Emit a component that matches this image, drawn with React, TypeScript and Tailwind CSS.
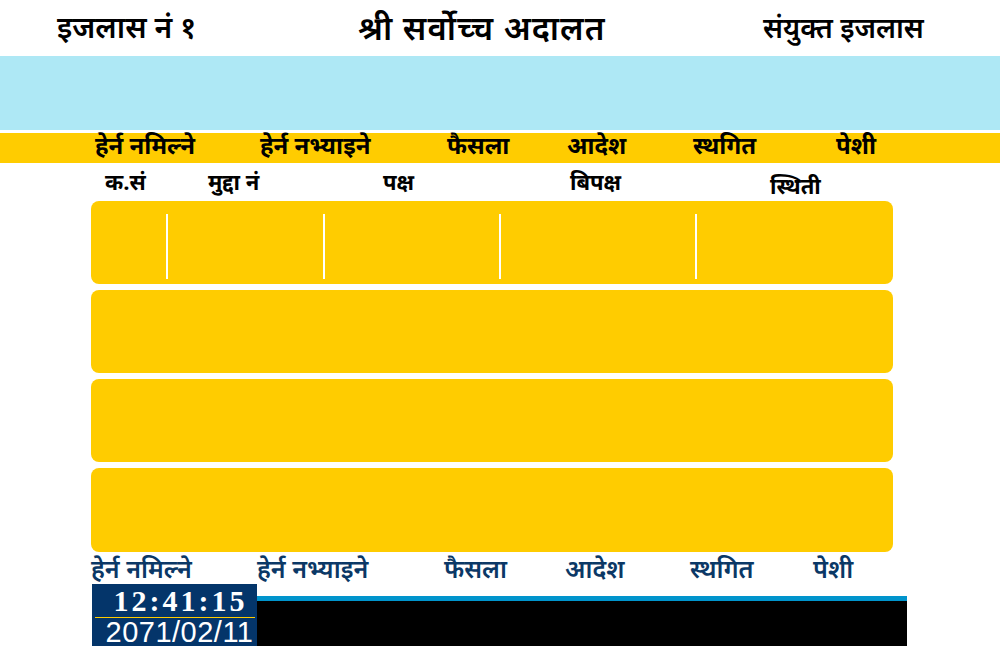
const topTabs = [
  { label: "हेर्न नमिल्ने", x: "w-[165px]" },
  { label: "हेर्न नभ्याइने", x: "w-[187px]" },
  { label: "फैसला", x: "w-[120px]" },
  { label: "आदेश", x: "w-[126px]" },
  { label: "स्थगित", x: "w-[143px]" },
  { label: "पेशी", x: "w-[60px]" },
];

const bottomTabs = [
  { label: "हेर्न नमिल्ने", x: "w-[166px]" },
  { label: "हेर्न नभ्याइने", x: "w-[187px]" },
  { label: "फैसला", x: "w-[121px]" },
  { label: "आदेश", x: "w-[125px]" },
  { label: "स्थगित", x: "w-[123px]" },
  { label: "पेशी", x: "w-[60px]" },
];

const deva = "font-['Noto_Sans_Devanagari','Noto_Sans',sans-serif]";

export default function App() {
  return (
    <div className={`w-[1000px] h-[650px] bg-white overflow-hidden ${deva}`}>
      {/* header */}
      <div className="h-[56px] flex items-center pt-[6px] text-black font-semibold leading-none">
        <div className="w-[358px] pl-[57px] text-[30px]">इजलास नं १</div>
        <div className="w-[405px] text-[33px] tracking-[1px]">श्री सर्वोच्च अदालत</div>
        <div className="text-[28px]">संयुक्त इजलास</div>
      </div>
      <div className="h-[74px] bg-[#aee8f5]" />
      <div className="h-[3px]" />
      <div className="h-[30px] bg-[#ffcc00] flex items-center pl-[95px] text-[24px] font-bold text-black leading-none">
        {topTabs.map((t) => (
          <div key={t.label} className={t.x}>
            {t.label}
          </div>
        ))}
      </div>

      {/* column headings */}
      <div className="h-[38px] flex items-center text-[22px] font-bold text-black leading-none pt-[6px]">
        <div className="w-[208px] pl-[105px]">क.सं</div>
        <div className="w-[175px]">मुद्दा नं</div>
        <div className="w-[187px]">पक्ष</div>
        <div className="w-[200px]">बिपक्ष</div>
        <div className="pt-[8px]">स्थिती</div>
      </div>

      {/* rows */}
      <div className="flex flex-col gap-[6px] pl-[91px] w-[893px]">
        <div className="h-[83px] rounded-[8px] bg-[#ffcc00] flex items-start pt-[13px]">
          <div className="w-[75px]" />
          <div className="w-[2px] h-[65px] bg-white" />
          <div className="w-[155px]" />
          <div className="w-[2px] h-[65px] bg-white" />
          <div className="w-[174px]" />
          <div className="w-[2px] h-[65px] bg-white" />
          <div className="w-[194px]" />
          <div className="w-[2px] h-[65px] bg-white" />
        </div>
        <div className="h-[83px] rounded-[8px] bg-[#ffcc00]" />
        <div className="h-[83px] rounded-[8px] bg-[#ffcc00]" />
        <div className="h-[84px] rounded-[8px] bg-[#ffcc00]" />
      </div>

      {/* bottom tabs */}
      <div className="h-[32px] flex items-center pl-[91px] pt-[8px] text-[25px] font-semibold text-[#0b3866] leading-none">
        {bottomTabs.map((t) => (
          <div key={t.label} className={t.x}>
            {t.label}
          </div>
        ))}
      </div>

      {/* clock + ticker */}
      <div className="flex pl-[92px]">
        <div className="w-[165px] h-[62px] bg-[#04356a] flex flex-col items-center text-white">
          <div className="h-[33px] flex items-center font-['Liberation_Serif',serif] font-bold text-[30px] tracking-[3px] leading-none pl-[12px]">
            12:41:15
          </div>
          <div className="w-[160px] h-[1px] bg-[#ffcc00]" />
          <div className="h-[28px] flex items-center font-['Liberation_Sans',sans-serif] text-[29px] tracking-[0.5px] leading-none pl-[10px]">
            2071/02/11
          </div>
        </div>
        <div className="w-[650px] pt-[12px]">
          <div className="h-[5px] bg-[#0094cc]" />
          <div className="h-[45px] bg-black" />
        </div>
      </div>
    </div>
  );
}
